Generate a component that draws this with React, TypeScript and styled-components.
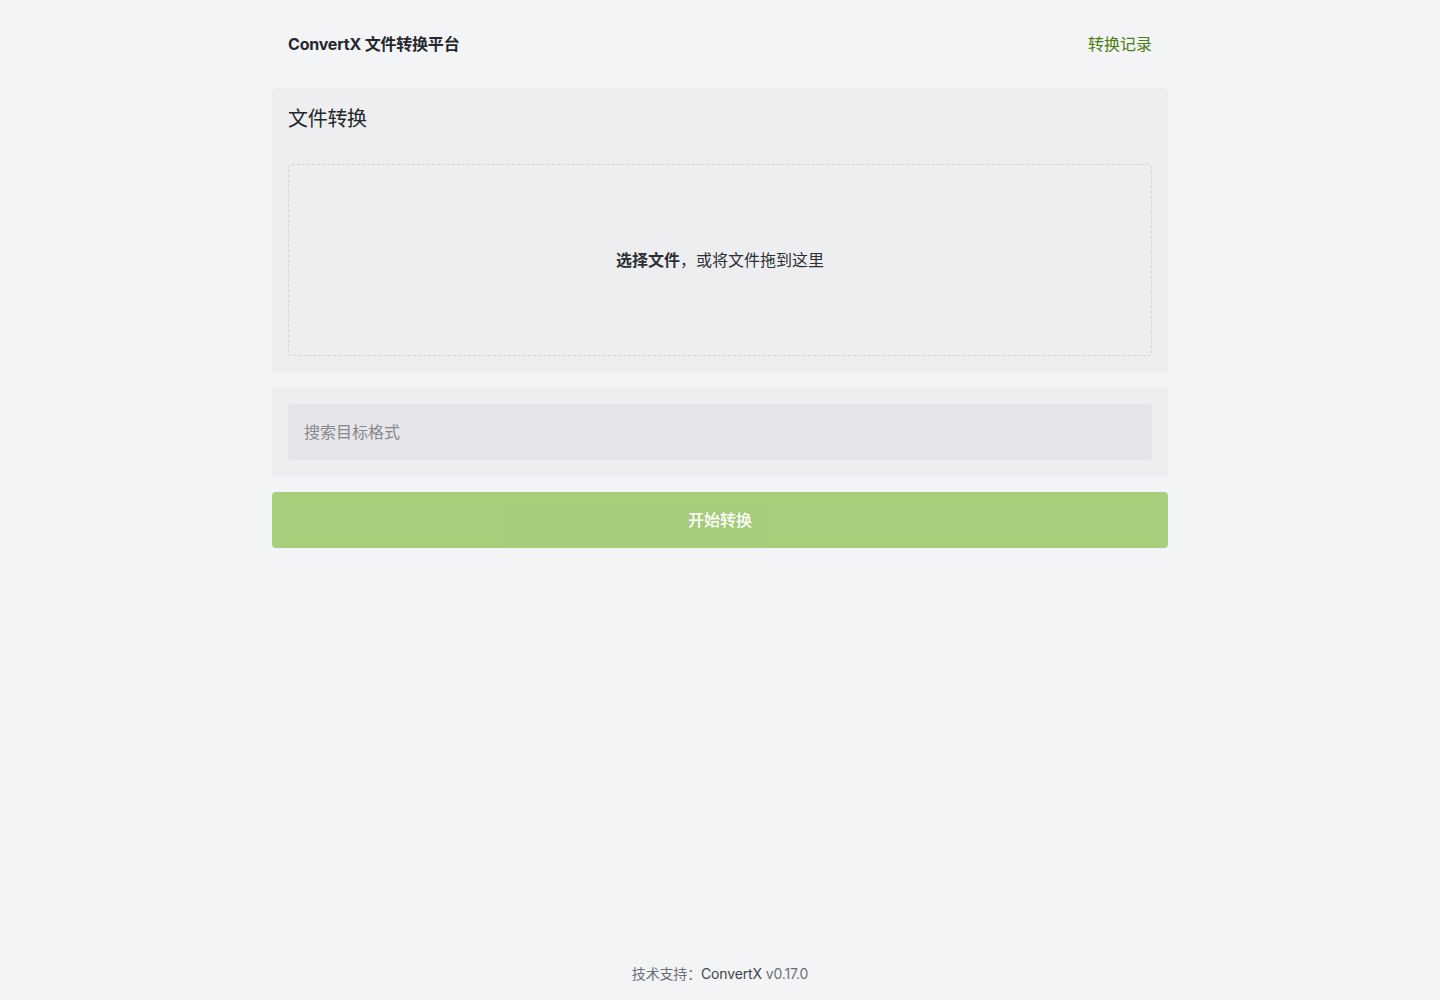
import React from "react"
import styled, { createGlobalStyle } from "styled-components"

const GlobalStyle = createGlobalStyle`
  html, body {
    margin: 0;
    padding: 0;
    background: #f3f4f6;
    font-family: Inter, "Noto Sans CJK SC", sans-serif;
    color: #1f2328;
  }
`

const App = () => {
  return (
    <Page>
      <GlobalStyle />
      <Main>
        <Header>
          <Brand>ConvertX 文件转换平台</Brand>
          <HistoryLink href="#">转换记录</HistoryLink>
        </Header>
        <Card>
          <CardTitle>文件转换</CardTitle>
          <DropZone>
            <DropText>
              <strong>选择文件</strong>，或将文件拖到这里
            </DropText>
          </DropZone>
        </Card>
        <Card>
          <SearchInput placeholder="搜索目标格式" />
        </Card>
        <ConvertButton>
          <GhostBox />
          <ButtonLabel>开始转换</ButtonLabel>
        </ConvertButton>
      </Main>
      <Footer>
        技术支持：<FooterLink>ConvertX</FooterLink> v0.17.0
      </Footer>
    </Page>
  )
}
export default App

const Page = styled.div`
  min-height: 1000px;
  display: flex;
  flex-direction: column;
  align-items: center;
`
const Main = styled.div`
  width: 896px;
  display: flex;
  flex-direction: column;
  gap: 16px;
  flex: 1;
`
const Header = styled.header`
  height: 72px;
  padding: 0 16px;
  display: flex;
  align-items: center;
  justify-content: space-between;
  margin-top: 7px;
  margin-bottom: -7px;
`
const Brand = styled.div`
  font-size: 16px;
  font-weight: 700;
  letter-spacing: -0.2px;
  color: #24272b;
`
const HistoryLink = styled.a`
  font-size: 16px;
  color: #4d7c0f;
  text-decoration: none;
`
const Card = styled.section`
  background: #eeeef0;
  border-radius: 4px;
  padding: 16px;
  display: flex;
  flex-direction: column;
`
const CardTitle = styled.h2`
  margin: 1px 0 31px;
  font-size: 20px;
  font-weight: 400;
  line-height: 28px;
  letter-spacing: -0.3px;
  color: #24272b;
`
const DropZone = styled.div`
  height: 190px;
  border: 1px dashed #d1d3d8;
  border-radius: 4px;
  display: flex;
  align-items: center;
  justify-content: center;
`
const DropText = styled.div`
  position: relative;
  top: -1px;
  font-size: 16px;
  color: #2b2e33;
  strong {
    font-weight: 700;
  }
`
const SearchInput = styled.input`
  height: 56px;
  box-sizing: border-box;
  border: none;
  outline: none;
  border-radius: 4px;
  background: #e5e6e9;
  padding: 0 16px;
  font-size: 16px;
  font-family: inherit;
  color: #24272b;
  &::placeholder {
    color: #85888e;
  }
`
const ConvertButton = styled.button`
  position: relative;
  height: 56px;
  border: none;
  border-radius: 4px;
  background: #a8ce7c;
  color: #ffffff;
  font-size: 16px;
  font-family: inherit;
  cursor: not-allowed;
  display: flex;
  align-items: center;
  justify-content: center;
`
const GhostBox = styled.span`
  position: absolute;
  left: 236px;
  top: 16px;
  width: 256px;
  height: 38px;
  background: rgba(150, 190, 110, 0.08);
`
const ButtonLabel = styled.span`
  position: relative;
  top: -1px;
  font-weight: 500;
`
const Footer = styled.footer`
  padding: 16px 0 17px;
  font-size: 14px;
  letter-spacing: -0.15px;
  color: #6b7078;
`
const FooterLink = styled.span`
  color: #3f444b;
`
